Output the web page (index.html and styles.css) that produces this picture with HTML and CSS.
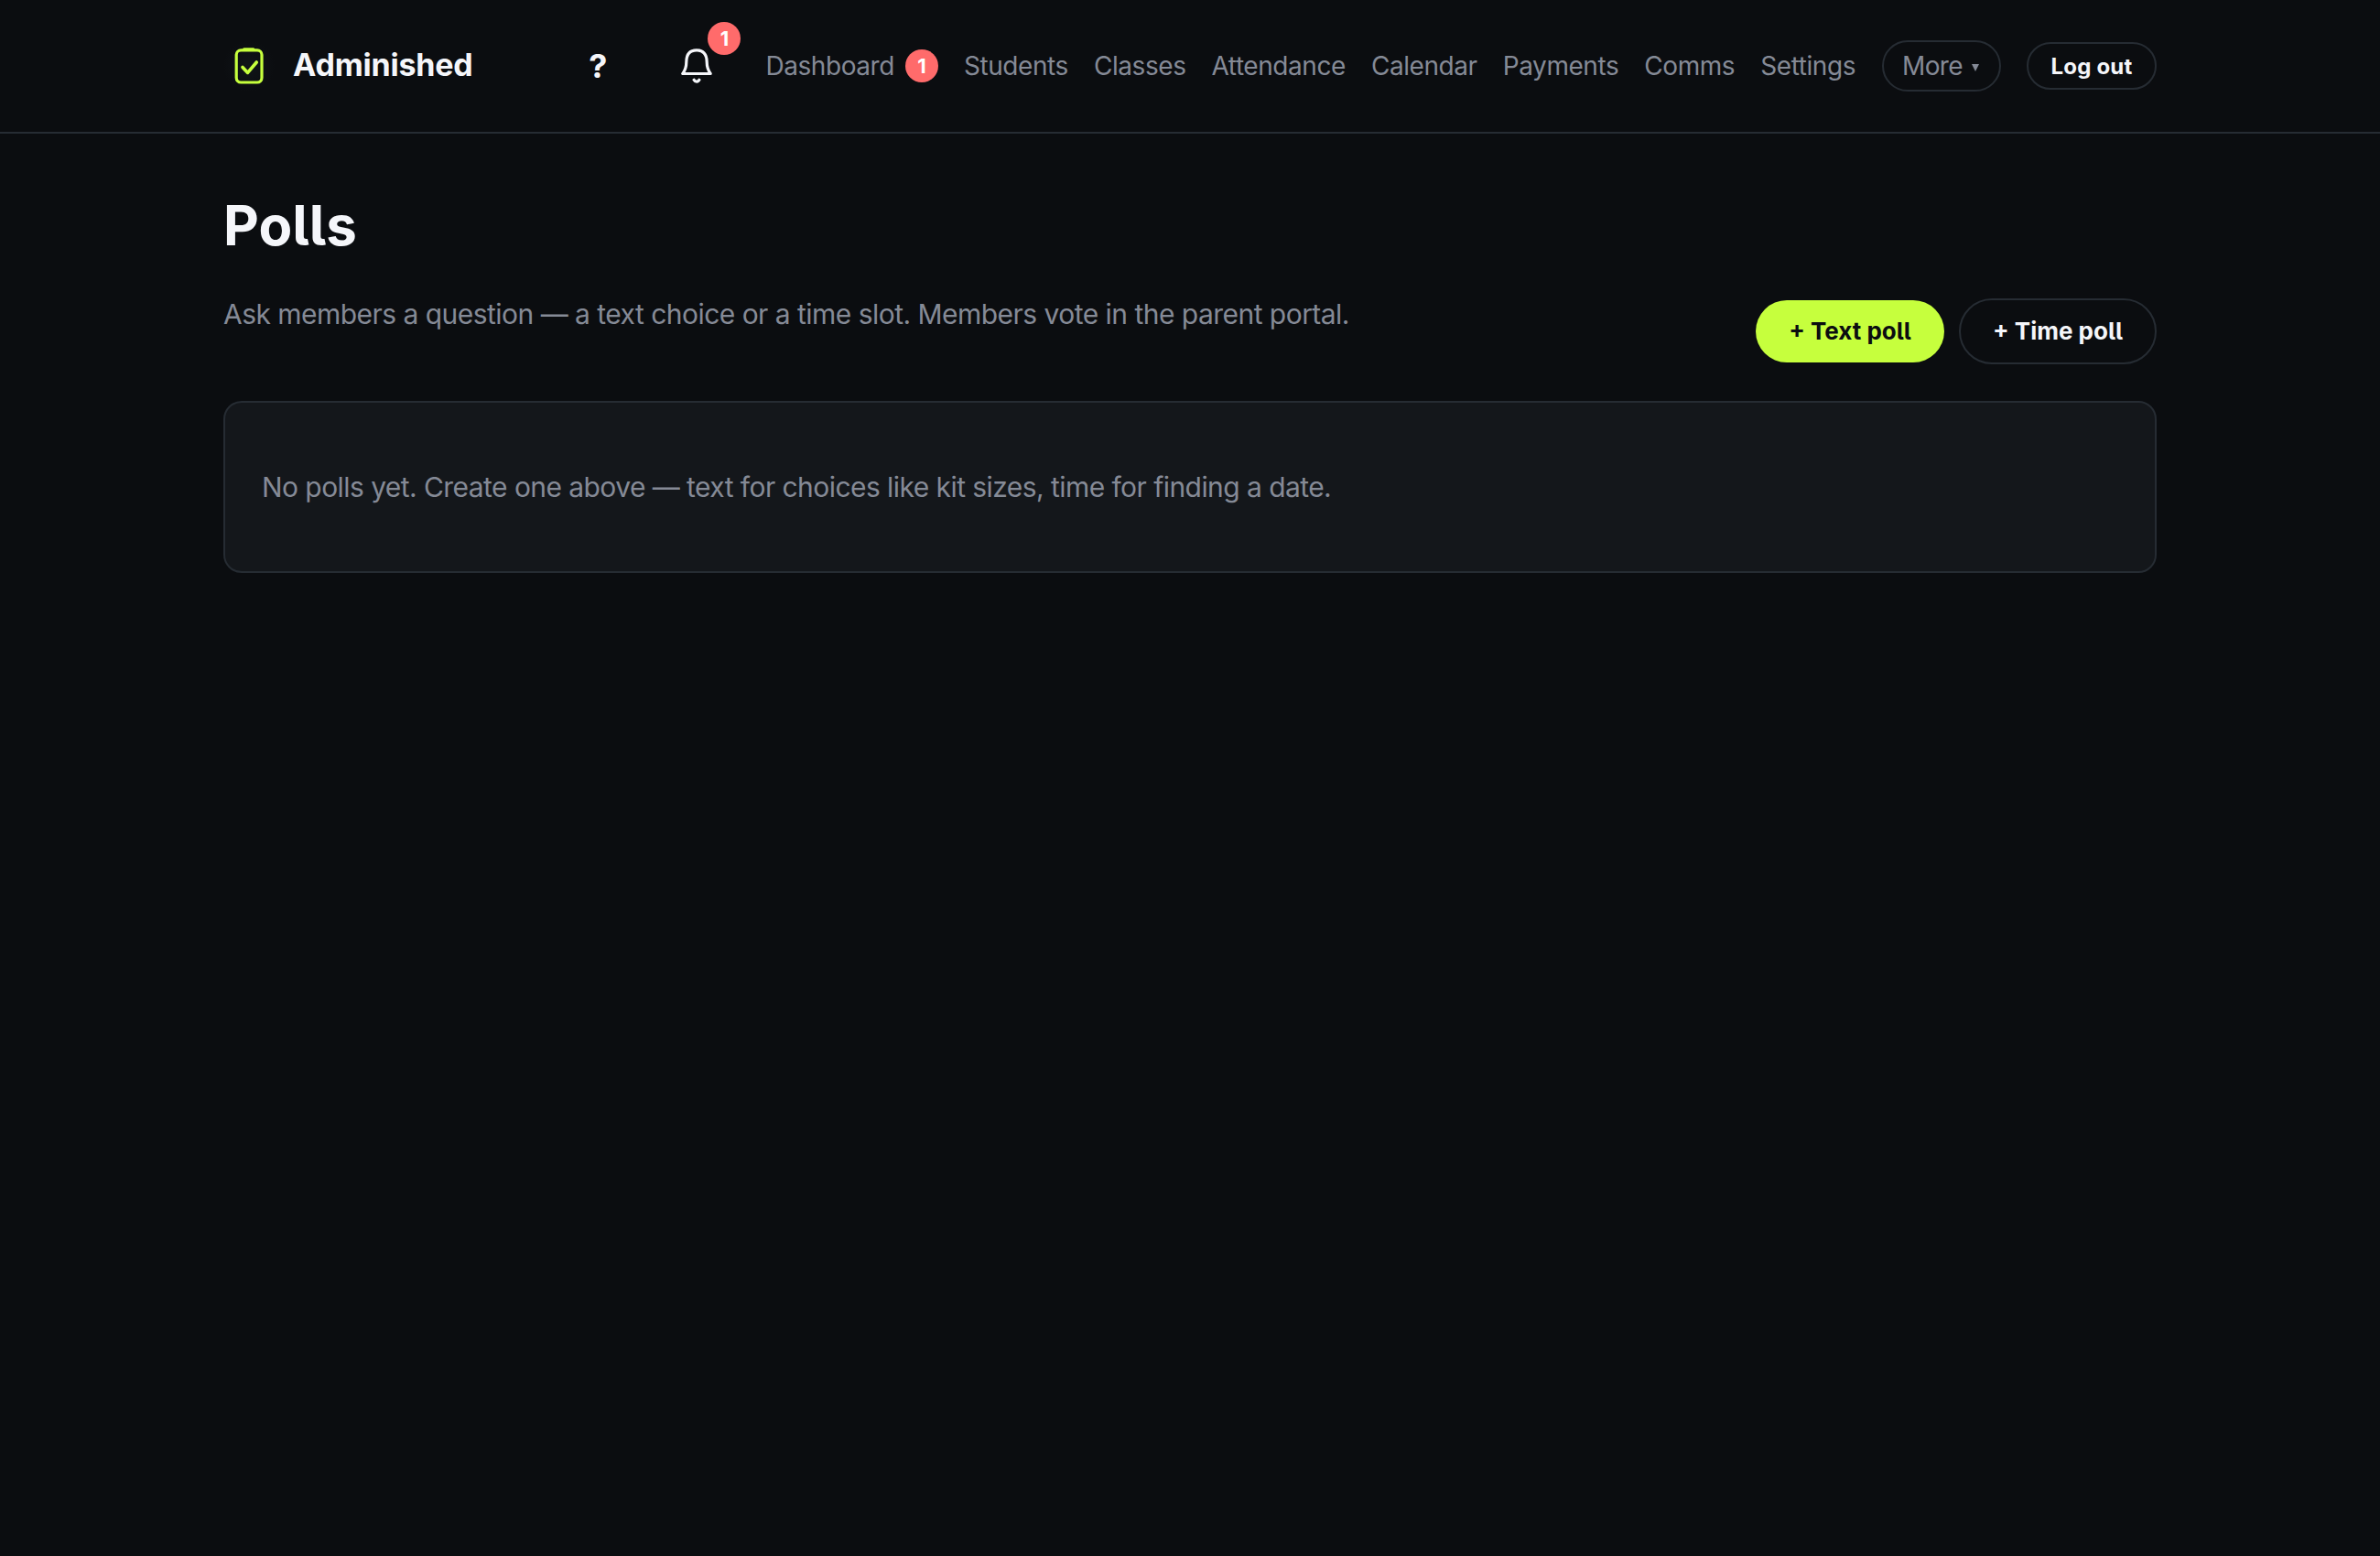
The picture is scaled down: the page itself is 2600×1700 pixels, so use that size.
FILE: index.html
```html
<!DOCTYPE html>
<html lang="en">
<head>
    <meta charset="utf-8" />
    <meta content="width=device-width, initial-scale=1.0" name="viewport" />
    <title>Polls - Adminished</title>
    <link rel="stylesheet" href="styles.css">
</head>
<body>
    <header class="site-header">
        <div class="container header-inner">
            <a class="brand">
                <svg class="brand-mark" viewBox="0 0 56 56" fill="none" stroke="#c6ff3d" stroke-width="3.2" stroke-linecap="round" stroke-linejoin="round">
                    <rect x="14.2" y="10.8" width="27.8" height="35.2" rx="5" />
                    <path d="M22.6 9.8h10.2" />
                    <path d="M21 29.4l5.6 6L36.3 24" stroke-width="3.6" />
                </svg>
                <span class="brand-name">Adminished</span>
            </a>
            <nav class="nav">
                <button class="icon-btn">?</button>
                <button class="icon-btn bell-btn">
                    <svg class="bell" viewBox="0 0 40 40" fill="none" stroke="currentColor" stroke-width="3.2" stroke-linecap="round" stroke-linejoin="round">
                        <path d="M4.8 28.5h30.400c-3-4-4-7.500-4-12.700C31.200 6.500 26.500 2.800 20 2.800S8.800 6.500 8.800 15.800c0 5.200-1 8.700-4 12.700z" />
                        <path d="M17.100 35.300c1.300 2.300 4.500 2.300 5.800 0" />
                    </svg>
                    <span class="badge bell-badge">1</span>
                </button>
                <a class="nav-link">Dashboard <span class="badge">1</span></a>
                <a class="nav-link">Students</a>
                <a class="nav-link">Classes</a>
                <a class="nav-link">Attendance</a>
                <a class="nav-link">Calendar</a>
                <a class="nav-link">Payments</a>
                <a class="nav-link">Comms</a>
                <a class="nav-link">Settings</a>
                <button class="more-btn">More <span class="caret"></span></button>
                <button class="logout-btn">Log out</button>
            </nav>
        </div>
    </header>

    <main class="container">
        <h1 class="page-title">Polls</h1>
        <div class="page-actions">
            <p class="muted">Ask members a question — a text choice or a time slot. Members vote in the parent portal.</p>
            <div class="buttons">
                <button class="btn btn-primary">+ Text poll</button>
                <button class="btn btn-outline">+ Time poll</button>
            </div>
        </div>
        <section class="card">
            <p class="muted">No polls yet. Create one above — text for choices like kit sizes, time for finding a date.</p>
        </section>
    </main>
</body>
</html>
```
FILE: styles.css
```css
* {
    box-sizing: border-box;
}

body {
    margin: 0;
    min-height: 100vh;
    background: #0b0d10;
    color: #f5f6fa;
    font-family: Inter, "Liberation Sans", sans-serif;
    font-size: 30px;
}

button {
    font-family: inherit;
    color: inherit;
    background: none;
    border: none;
    padding: 0;
}

.container {
    width: 2112px;
    margin: 0 auto;
}

/* Header */
.site-header {
    border-bottom: 2px solid #262c33;
}

.header-inner {
    display: flex;
    justify-content: space-between;
    align-items: center;
    height: 144px;
}

.brand {
    display: flex;
    align-items: center;
    gap: 20px;
}

.brand-mark {
    width: 56px;
    height: 56px;
    background: radial-gradient(circle, #101418 0%, #0b0d10 72%);
}

.brand-name {
    font-size: 34px;
    font-weight: 700;
    letter-spacing: -0.2px;
    line-height: 40px;
    padding-bottom: 3px;
}

.nav {
    display: flex;
    align-items: center;
    gap: 28px;
}

.icon-btn {
    display: flex;
    align-items: center;
    justify-content: center;
    width: 80px;
    height: 80px;
    font-size: 36px;
    font-weight: 700;
    line-height: 44px;
}

.bell-btn {
    position: relative;
    margin-right: 7px;
}

.bell {
    width: 40px;
    height: 40px;
}

.badge {
    display: flex;
    align-items: center;
    justify-content: center;
    width: 36px;
    height: 36px;
    border-radius: 50%;
    background: #ff6b6b;
    color: #fff;
    font-size: 22px;
    font-weight: 700;
    letter-spacing: 0;
}

.bell-badge {
    position: absolute;
    top: -8px;
    right: -8px;
}

.nav-link {
    display: flex;
    align-items: center;
    gap: 12px;
    color: #858a96;
    font-size: 28px;
    letter-spacing: -0.43px;
}

.more-btn {
    display: flex;
    align-items: center;
    justify-content: center;
    gap: 10px;
    width: 130px;
    height: 56px;
    margin-left: 1px;
    padding-right: 2px;
    border: 2px solid #262c33;
    border-radius: 28px;
    color: #858a96;
    font-size: 28px;
    letter-spacing: -0.6px;
}

.caret {
    margin-top: 4px;
    border-left: 4px solid transparent;
    border-right: 4px solid transparent;
    border-top: 8px solid #858a96;
}

.logout-btn {
    width: 142px;
    height: 52px;
    border: 2px solid #262c33;
    border-radius: 26px;
    font-size: 24px;
    font-weight: 700;
    letter-spacing: 0.2px;
}

/* Page */
.page-title {
    margin: 64px 0 0;
    font-size: 60px;
    font-weight: 700;
    line-height: 72px;
    letter-spacing: 0;
    font-feature-settings: "cv05";
}

.page-actions {
    display: flex;
    justify-content: space-between;
    align-items: flex-end;
    height: 79px;
    margin: 37px 0 40px;
}

.muted {
    margin: 0;
    color: #858a96;
    line-height: 48px;
    letter-spacing: -0.53px;
}

.page-actions .muted {
    align-self: flex-start;
}

.card .muted {
    letter-spacing: -0.56px;
}

.buttons {
    display: flex;
    align-items: center;
    gap: 16px;
}

.btn {
    padding-bottom: 2px;
    border-radius: 36px;
    font-size: 26px;
    font-weight: 700;
    letter-spacing: 0;
    font-feature-settings: "cv05";
}

.btn-primary {
    width: 206px;
    height: 68px;
    background: #c6ff3d;
    color: #0b0d10;
}

.btn-outline {
    width: 216px;
    height: 72px;
    border: 2px solid #262c33;
}

.card {
    display: flex;
    align-items: center;
    height: 188px;
    padding: 0 40px;
    border: 2px solid #262c33;
    border-radius: 20px;
    background: #14171b;
}
```
